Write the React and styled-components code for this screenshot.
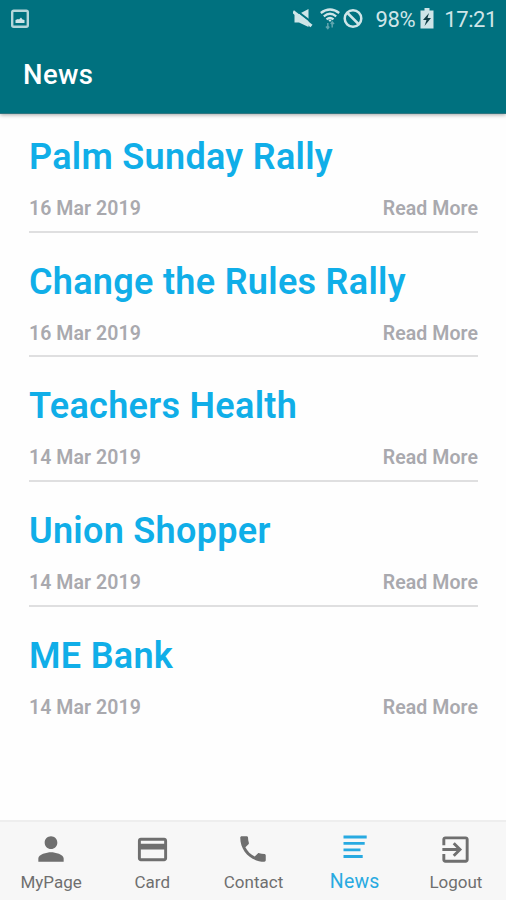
import React from 'react';
import styled, { createGlobalStyle } from 'styled-components';

const GlobalStyle = createGlobalStyle`
  body {
    margin: 0;
    background: #fefefe;
    font-family: Roboto, 'Liberation Sans', sans-serif;
  }
`;

// Main screen container
const Screen = styled.div`
  display: flex;
  flex-direction: column;
  width: 100%;
  max-width: 506px;
  height: 900px;
  overflow: hidden;
  background: #fefefe;
`;

// Header with the status bar and page title
const Header = styled.header`
  flex: none;
  height: 114px;
  box-sizing: border-box;
  background: #00717f;
  border-bottom: 1px solid #2f7580;
  box-shadow: 0 1px 4px rgba(0, 0, 0, 0.35);
`;

const StatusBar = styled.div`
  display: flex;
  align-items: center;
  height: 38px;
  padding: 0 9px 0 10px;
  color: #cfe5e8;
  font-size: 22px;
  line-height: 38px;
`;

const StatusIcon = styled.svg`
  display: block;
  flex: none;
  width: ${({ $width }) => $width}px;
  height: 22px;
  margin-right: ${({ $gap }) => $gap || 0}px;
`;

const StatusRight = styled.div`
  display: flex;
  align-items: center;
  margin-left: auto;
`;

const StatusText = styled.span`
  padding-top: 1px;
  margin-right: ${({ $gap }) => $gap || 0}px;
  letter-spacing: -0.4px;
`;

const PageTitle = styled.h1`
  margin: 0;
  padding: 21px 0 0 23px;
  color: #fff;
  font-size: 27.5px;
  font-weight: 500;
  line-height: 32px;
  letter-spacing: 0.4px;
`;

// News list
const List = styled.main`
  flex: 1;
  padding: 0 28px 0 29px;
`;

const Item = styled.article`
  height: 124.8px;
  box-sizing: border-box;
  padding-top: 28px;
  border-bottom: 2px solid #dfdfe0;

  &:first-child {
    height: 118.5px;
    padding-top: 22px;
  }

  &:last-child {
    border-bottom: none;
  }
`;

const ItemTitle = styled.h2`
  margin: 0;
  color: #10aee8;
  font-size: 36px;
  font-weight: 600;
  line-height: 42px;
  letter-spacing: 0.3px;
  white-space: nowrap;
`;

const ItemMeta = styled.div`
  display: flex;
  justify-content: space-between;
  margin-top: 20px;
  color: #a9a9ae;
  font-size: 19.5px;
  font-weight: 600;
  line-height: 22px;
  letter-spacing: 0.08px;
`;

// Bottom navigation
const TabBar = styled.nav`
  display: grid;
  grid-template-columns: repeat(5, 1fr);
  flex: none;
  height: 80px;
  box-sizing: border-box;
  background: #f7f7f7;
  border-top: 2px solid #eeeeee;
`;

const Tab = styled.div`
  display: flex;
  flex-direction: column;
  align-items: center;
  padding-left: 1px;
  color: ${({ $active }) => ($active ? '#28aae1' : '#6f6f6f')};
`;

const TabIcon = styled.svg`
  display: block;
  width: ${({ $size }) => $size}px;
  height: ${({ $size }) => $size}px;
  margin: ${({ $top }) => $top}px 0 auto;
  fill: currentColor;
`;

const TabLabel = styled.span`
  margin-bottom: 7px;
  font-size: ${({ $active }) => ($active ? 19.5 : 17)}px;
  line-height: 22px;
  letter-spacing: ${({ $active }) => ($active ? 0.2 : 0)}px;
`;

const news = [
  { title: 'Palm Sunday Rally', date: '16 Mar 2019' },
  { title: 'Change the Rules Rally', date: '16 Mar 2019' },
  { title: 'Teachers Health', date: '14 Mar 2019' },
  { title: 'Union Shopper', date: '14 Mar 2019' },
  { title: 'ME Bank', date: '14 Mar 2019' },
];

const tabs = [
  {
    label: 'MyPage',
    size: 38,
    top: 8,
    path: 'M12 12c2.21 0 4-1.79 4-4s-1.79-4-4-4-4 1.79-4 4 1.79 4 4 4zm0 2c-2.67 0-8 1.34-8 4v2h16v-2c0-2.66-5.33-4-8-4z',
  },
  {
    label: 'Card',
    size: 35,
    top: 9.5,
    path: 'M20 4H4c-1.11 0-1.99.89-1.99 2L2 18c0 1.11.89 2 2 2h16c1.11 0 2-.89 2-2V6c0-1.11-.89-2-2-2zm0 14H4v-6h16v6zm0-10H4V6h16v2z',
  },
  {
    label: 'Contact',
    size: 34,
    top: 10,
    path: 'M6.62 10.79c1.44 2.83 3.76 5.14 6.59 6.59l2.2-2.2c.27-.27.67-.36 1.02-.24 1.12.37 2.33.57 3.57.57.55 0 1 .45 1 1V20c0 .55-.45 1-1 1-9.39 0-17-7.61-17-17 0-.55.45-1 1-1h3.5c.55 0 1 .45 1 1 0 1.25.2 2.45.57 3.57.11.35.03.74-.25 1.02l-2.2 2.2z',
  },
  {
    label: 'News',
    size: 24,
    top: 12.5,
    active: true,
    path: 'M.5.5h23.2v3H.5zM.5 7h21.2v2.8H.5zM.5 13.5h17v2.8h-17zM.5 20h19.2v2.9H.5z',
  },
  {
    label: 'Logout',
    size: 35,
    top: 9.5,
    path: 'M10.09 15.59L11.5 17l5-5-5-5-1.41 1.41L12.67 11H3v2h9.67l-2.58 2.59zM19 3H5c-1.11 0-2 .9-2 2v4h2V5h14v14H5v-4H3v4c0 1.1.89 2 2 2h14c1.1 0 2-.9 2-2V5c0-1.1-.9-2-2-2z',
  },
];

function App() {
  return (
    <>
      <GlobalStyle />
      <Screen>
        <Header>
          <StatusBar>
            <StatusIcon $width={20} viewBox="0 0 20 22">
              <rect x="2.2" y="2.7" width="15.6" height="16" rx="1.5" fill="none" stroke="#b5d6da" strokeWidth="2.4" />
              <path d="M5.5 15v-3l2.5-1 1 .5 2-2 1.5 2 2 .5v3z" fill="#cfe5e8" />
            </StatusIcon>
            <StatusRight>
              <StatusIcon $width={20} $gap={7} viewBox="0 0 20 22">
                <path d="M1.5 6H6l9.500-5v18L6 14.500H1.500z" fill="#cfe5e8" />
                <path d="M1.500 1l18 14" stroke="#00717f" strokeWidth="2" />
                <path d="M0 3.500l18.500 14.500" stroke="#cfe5e8" strokeWidth="3.200" />
              </StatusIcon>
              <StatusIcon $width={20} $gap={3} viewBox="0 0 20 22">
                <g fill="none" stroke="#cfe5e8" strokeWidth="2.3">
                  <path d="M.8 5q9.200-7 18.400 0" />
                  <path d="M3.800 8.300q6.200-5 12.400 0" />
                  <path d="M6.500 11.300q3.500-2.800 7 0" />
                </g>
                <path d="M8 11.500h4l-2 2.500z" fill="#cfe5e8" />
                <path d="M7.800 15v5.500M12.200 14v5.500M6 18.500l1.800 2 1.400-2M10.800 16l1.400-2 1.800 2" fill="none" stroke="#5fa5ae" strokeWidth="1.5" />
              </StatusIcon>
              <StatusIcon $width={20} $gap={13} viewBox="0 0 20 22">
                <circle cx="10" cy="10.5" r="8.3" fill="none" stroke="#cfe5e8" strokeWidth="2.5" />
                <path d="M4 4.500l12 12" stroke="#cfe5e8" strokeWidth="2.5" />
              </StatusIcon>
              <StatusText $gap={5}>98%</StatusText>
              <StatusIcon $width={14} $gap={10} viewBox="0 0 14 22">
                <path d="M4.500 0h5v2.500H13.500V20.500H.5V2.500h4z" fill="#cfe5e8" />
                <path d="M9 5L3 12h3.500L4.500 18l6.500-8H7.500z" fill="#123f47" />
              </StatusIcon>
              <StatusText>17:21</StatusText>
            </StatusRight>
          </StatusBar>
          <PageTitle>News</PageTitle>
        </Header>

        <List>
          {news.map((item) => (
            <Item key={item.title}>
              <ItemTitle>{item.title}</ItemTitle>
              <ItemMeta>
                <span>{item.date}</span>
                <span>Read More</span>
              </ItemMeta>
            </Item>
          ))}
        </List>

        <TabBar>
          {tabs.map((tab) => (
            <Tab key={tab.label} $active={tab.active}>
              <TabIcon $size={tab.size} $top={tab.top} viewBox="0 0 24 24">
                <path d={tab.path} />
              </TabIcon>
              <TabLabel $active={tab.active}>{tab.label}</TabLabel>
            </Tab>
          ))}
        </TabBar>
      </Screen>
    </>
  );
}

export default App;
